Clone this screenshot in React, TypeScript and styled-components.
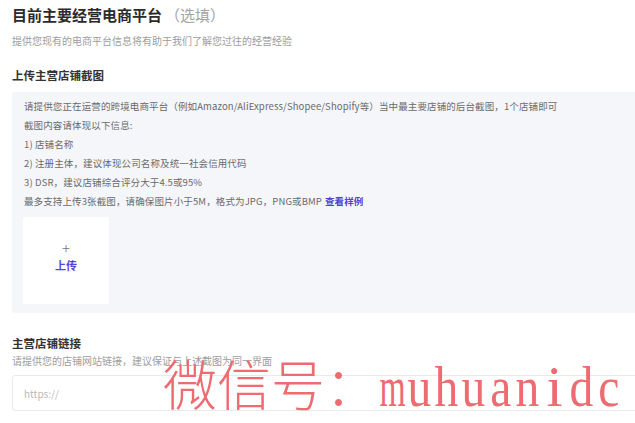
import React from "react";
import styled, { createGlobalStyle } from "styled-components";

const Global = createGlobalStyle`
  html, body { margin: 0; padding: 0; background: #ffffff; }
  body { font-family: "Noto Sans CJK SC", "Noto Sans", sans-serif; overflow: hidden; }
`;

const Page = styled.div`
  position: relative;
  width: 635px;
  height: 423px;
  padding: 5px 0 0 12px;
  box-sizing: border-box;
  overflow: hidden;
`;

const Title = styled.h1`
  margin: 0;
  font-size: 15px;
  line-height: 20px;
  font-weight: 700;
  color: #2b2b2b;
`;

const Optional = styled.span`
  font-weight: 400;
  color: #a3a3a3;
  margin-left: 3px;
`;

const Hint = styled.p<{ $gap?: number }>`
  margin: ${(p) => p.$gap ?? 0}px 0 0;
  font-size: 10px;
  line-height: 14px;
  color: #9d9d9d;
  white-space: nowrap;
`;

const Heading = styled.h2<{ $gap: number }>`
  margin: ${(p) => p.$gap}px 0 0;
  font-size: 11.5px;
  line-height: 16px;
  font-weight: 700;
  color: #333333;
`;

const Panel = styled.div`
  margin-top: 9px;
  background: #f5f6fa;
  border-radius: 3px 0 0 3px;
  padding: 5px 0 9px 12px;
`;

const Line = styled.div`
  font-size: 9.5px;
  line-height: 19px;
  letter-spacing: 0.12px;
  color: #6a6a6a;
  white-space: nowrap;
`;

const Link = styled.a`
  color: #5142d4;
  font-weight: 700;
  text-decoration: none;
  margin-left: 3px;
`;

const UploadBox = styled.div`
  margin: 6px 0 0 -1px;
  width: 86px;
  height: 87px;
  box-sizing: border-box;
  padding-bottom: 7px;
  background: #ffffff;
  border-radius: 2px;
  display: flex;
  flex-direction: column;
  align-items: center;
  justify-content: center;
  gap: 2px;
`;

const Plus = styled.span`
  font-size: 15px;
  line-height: 14px;
  font-weight: 300;
  color: #777777;
`;

const UploadLabel = styled.span`
  font-size: 11px;
  line-height: 16px;
  font-weight: 700;
  color: #5546d6;
`;

const Input = styled.input`
  display: block;
  margin-top: 7px;
  width: 640px;
  height: 36px;
  box-sizing: border-box;
  border: 1px solid #e8e9ee;
  border-radius: 3px;
  padding: 0 11px;
  font-family: inherit;
  font-size: 10px;
  color: #333;
  background: #fff;
  &::placeholder { color: #b9b9b9; }
`;

const Watermark = styled.div`
  position: absolute;
  left: 163px;
  top: 352px;
  display: flex;
  align-items: baseline;
  color: #ee6b72;
  pointer-events: none;
  white-space: nowrap;
`;

const WmCjk = styled.span`
  font-family: "Noto Sans CJK SC", sans-serif;
  font-size: 54px;
  line-height: 62px;
  font-weight: 300;
`;

const WmCell = styled.span`
  display: inline-flex;
  justify-content: center;
  width: 27px;
  font-family: "Liberation Serif", serif;
  font-size: 58px;
  line-height: 62px;
`;

const WmGlyph = styled.span<{ $scale: number }>`
  display: inline-block;
  transform: scaleX(${(p) => p.$scale});
`;

const latin = "muhuanidc".split("");
const scaleFor = (c: string) => (c === "m" ? 0.58 : c === "i" ? 1 : 0.82);

export default function App() {
  return (
    <>
      <Global />
      <Page>
        <Title>
          目前主要经营电商平台<Optional>（选填）</Optional>
        </Title>
        <Hint $gap={9}>提供您现有的电商平台信息将有助于我们了解您过往的经营经验</Hint>

        <Heading $gap={19}>上传主营店铺截图</Heading>
        <Panel>
          <Line>
            请提供您正在运营的跨境电商平台（例如Amazon/AliExpress/Shopee/Shopify等）当中最主要店铺的后台截图，1个店铺即可
          </Line>
          <Line>截图内容请体现以下信息:</Line>
          <Line>1) 店铺名称</Line>
          <Line>2) 注册主体，建议体现公司名称及统一社会信用代码</Line>
          <Line>3) DSR，建议店铺综合评分大于4.5或95%</Line>
          <Line>
            最多支持上传3张截图，请确保图片小于5M，格式为JPG，PNG或BMP
            <Link href="#">查看样例</Link>
          </Line>
          <UploadBox>
            <Plus>+</Plus>
            <UploadLabel>上传</UploadLabel>
          </UploadBox>
        </Panel>

        <Heading $gap={22}>主营店铺链接</Heading>
        <Hint $gap={3}>请提供您的店铺网站链接，建议保证与上述截图为同一界面</Hint>
        <Input placeholder="https://" />

        <Watermark>
          <WmCjk>微信号：</WmCjk>
          {latin.map((c, i) => (
            <WmCell key={i}>
              <WmGlyph $scale={scaleFor(c)}>{c}</WmGlyph>
            </WmCell>
          ))}
        </Watermark>
      </Page>
    </>
  );
}
